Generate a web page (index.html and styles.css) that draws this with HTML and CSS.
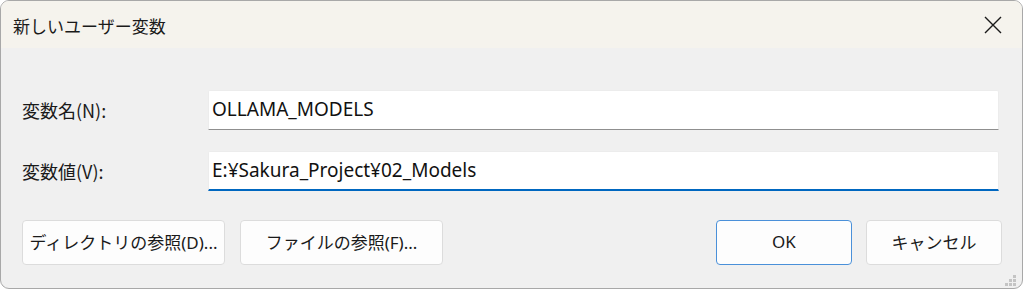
FILE: index.html
```html
<!DOCTYPE html>
<html lang="ja">
<head>
<meta charset="utf-8">
<link rel="stylesheet" href="styles.css">
</head>
<body>
<div class="window">
  <div class="titlebar">
    <span class="title">新しいユーザー変数</span>
    <span class="close">
      <svg width="18" height="18" viewBox="0 0 18 18"><path d="M1 1 L17 17 M17 1 L1 17" stroke="#1a1a1a" stroke-width="1.4" fill="none"/></svg>
    </span>
  </div>
  <div class="content">
    <div class="fields">
      <label class="label">変数名(N):</label>
      <div class="input">OLLAMA_MODELS</div>
      <label class="label">変数値(V):</label>
      <div class="input focused">E:¥Sakura_Project¥02_Models</div>
    </div>
    <div class="buttons">
      <div class="left-buttons">
        <div class="btn wide">ディレクトリの参照(D)...</div>
        <div class="btn wide">ファイルの参照(F)...</div>
      </div>
      <div class="right-buttons">
        <div class="btn small default">OK</div>
        <div class="btn small">キャンセル</div>
      </div>
    </div>
  </div>
  <svg class="grip" width="16" height="12" viewBox="0 0 16 12">
    <g fill="#c4c4c4">
      <rect x="12" y="0" width="3" height="3"/>
      <rect x="8" y="4" width="3" height="3"/><rect x="12" y="4" width="3" height="3"/>
      <rect x="4" y="8" width="3" height="3"/><rect x="8" y="8" width="3" height="3"/><rect x="12" y="8" width="3" height="3"/>
    </g>
  </svg>
</div>
</body>
</html>
```

FILE: styles.css
```css
html, body {
  margin: 0;
  padding: 0;
  background: #ffffff;
}
body {
  font-family: "Noto Sans", "Noto Sans CJK JP", sans-serif;
  color: #1b1b1b;
}
.window {
  position: relative;
  box-sizing: border-box;
  width: 1023px;
  height: 289px;
  border: 1px solid #a8a8a8;
  border-radius: 9px;
  background: #f0f0f0;
  overflow: hidden;
}
.titlebar {
  height: 47px;
  background: #f5f3ed;
  display: flex;
  align-items: center;
  justify-content: space-between;
  padding: 0 20px 0 12px;
}
.title {
  font-family: "Noto Sans CJK JP", sans-serif;
  font-size: 17px;
  color: #1a1a1a;
  position: relative;
  top: 1px;
}
.close {
  display: flex;
  align-items: center;
}
.content {
  padding: 42px 21px 0 21px;
}
.fields {
  display: grid;
  grid-template-columns: 186px 791px;
  row-gap: 21px;
  align-items: center;
}
.label {
  font-family: "Noto Sans CJK JP", sans-serif;
  font-size: 18px;
  color: #1a1a1a;
}
.input {
  box-sizing: border-box;
  height: 40px;
  background: #ffffff;
  border: 1px solid #ececec;
  border-bottom: 1px solid #8f8f8f;
  border-radius: 2px 2px 0 0;
  padding: 0 0 0 3px;
  font-size: 19px;
  line-height: 37px;
  color: #111;
}
.input.focused {
  border-bottom: 2px solid #0067c0;
  line-height: 36px;
}
.buttons {
  display: flex;
  justify-content: space-between;
  margin-top: 29px;
  margin-right: -1px;
}
.left-buttons, .right-buttons {
  display: flex;
  gap: 15px;
}
.right-buttons {
  gap: 14px;
}
.btn {
  box-sizing: border-box;
  height: 45px;
  background: #fdfdfd;
  border: 1px solid #dcdcdc;
  border-radius: 4px;
  display: flex;
  align-items: center;
  justify-content: center;
  padding-bottom: 2px;
  font-family: "Noto Sans", "Noto Sans CJK JP", sans-serif;
  font-size: 17px;
  color: #1a1a1a;
}
.btn.wide {
  width: 203px;
}
.btn.small {
  width: 136px;
}
.btn.default {
  border-color: #4a90d9;
}
.grip {
  position: absolute;
  right: 5px;
  bottom: 1px;
}
```
